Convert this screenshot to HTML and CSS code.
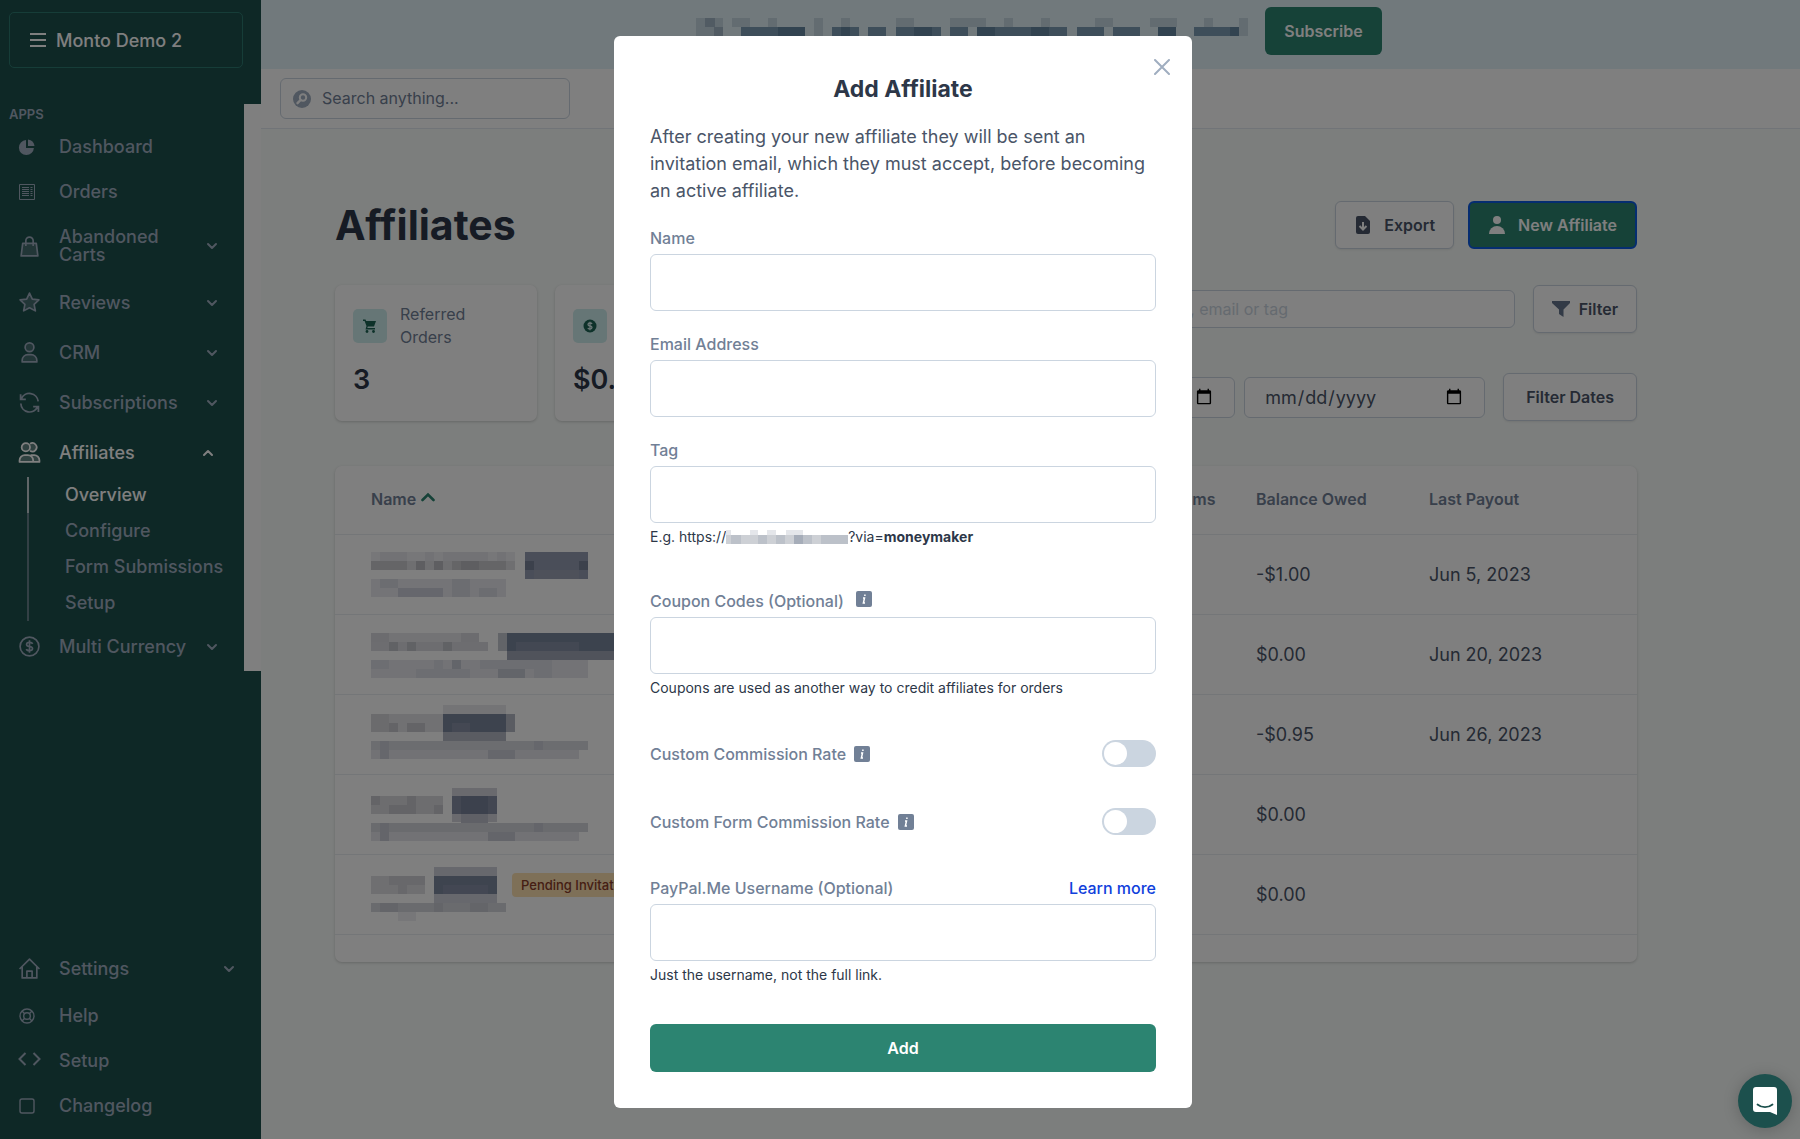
FILE: index.html
```html
<!DOCTYPE html>
<html lang="en">
<head>
  <meta charset="UTF-8">
  <meta name="viewport" content="width=device-width, initial-scale=1.0">
  <title>Affiliates - Monto</title>
  <link rel="stylesheet" href="styles.css">
</head>
<body>
<svg width="0" height="0" class="sprite">
  <symbol id="chevron-down" viewBox="0 0 12 8"><path d="M2 2l4 4 4-4" fill="none" stroke="currentColor" stroke-width="2" stroke-linecap="round" stroke-linejoin="round"/></symbol>
  <symbol id="chevron-up" viewBox="0 0 12 8"><path d="M2 6l4-4 4 4" fill="none" stroke="currentColor" stroke-width="2" stroke-linecap="round" stroke-linejoin="round"/></symbol>
  <symbol id="info" viewBox="0 0 16 16"><rect width="16" height="16" rx="2" fill="#718096"/><path d="M8.900 3.500v1.400M7 7h1.500l-1.100 5h1.600" fill="none" stroke="#fff" stroke-width="1.500"/></symbol>
</svg>

<div class="app">
  <aside class="sidebar">
    <div class="store">
      <button class="store-btn">
        <svg width="16" height="14" viewBox="0 0 16 14"><path d="M0 1h16M0 7h16M0 13h16" stroke="currentColor" stroke-width="2"/></svg>
        Monto Demo 2
      </button>
    </div>

    <div class="nav-scroll">
      <nav class="nav">
        <div class="nav-title">APPS</div>
        <a href="#" class="nav-item">
          <svg class="icon small" viewBox="0 0 18 18" fill="currentColor"><path d="M8 2.100V10h7.900A7.500 7.500 0 1 1 8 2.100z"/><path d="M10 1.500A7.500 7.500 0 0 1 16.500 8H10z"/></svg>
          <span>Dashboard</span>
        </a>
        <a href="#" class="nav-item">
          <svg class="icon small" viewBox="0 0 18 18" fill="none" stroke="currentColor"><path d="M1.500 1.500h15v15h-15z"/><path d="M4 4.500h7M4 6.500h7M4 8.500h7M4 10.500h7M4 12.500h7M12.500 4.500h2M12.500 6.500h2M12.500 8.500h2M12.500 10.500h2M12.500 12.500h2"/></svg>
          <span>Orders</span>
        </a>
        <a href="#" class="nav-item">
          <svg class="icon" viewBox="0 0 22 22" stroke="currentColor" stroke-width="1.600" fill="none" stroke-linejoin="round"><path d="M4.500 8h13L19 20H3z" fill="currentColor" fill-opacity=".3"/><path d="M7.500 10.500V5.500a3.500 3.500 0 0 1 7 0v5"/></svg>
          <span>Abandoned Carts</span>
          <svg class="chev"><use href="#chevron-down"/></svg>
        </a>
        <a href="#" class="nav-item">
          <svg class="icon" viewBox="0 0 22 22" stroke="currentColor" stroke-width="1.600" fill="currentColor" fill-opacity=".3" stroke-linejoin="round"><path d="M11 2l2.700 5.700 6.300.8-4.600 4.300 1.200 6.200L11 16l-5.600 3 1.200-6.200L2 8.500l6.300-.8z"/></svg>
          <span>Reviews</span>
          <svg class="chev"><use href="#chevron-down"/></svg>
        </a>
        <a href="#" class="nav-item">
          <svg class="icon" viewBox="0 0 22 22" stroke="currentColor" stroke-width="1.600" fill="currentColor" fill-opacity=".3" stroke-linejoin="round"><circle cx="11" cy="6" r="4.200"/><path d="M4 20v-1.500a5.500 5.500 0 0 1 5.500-5.500h3a5.500 5.500 0 0 1 5.500 5.500V20z"/></svg>
          <span>CRM</span>
          <svg class="chev"><use href="#chevron-down"/></svg>
        </a>
        <a href="#" class="nav-item">
          <svg class="icon" viewBox="0 0 22 22" stroke="currentColor" stroke-width="1.700" fill="none"><path d="M2.500 3v5h5M3.200 7.500A8.400 8.400 0 0 1 19.300 10M19.500 20v-5h-5M18.800 15A8.400 8.400 0 0 1 2.700 12"/></svg>
          <span>Subscriptions</span>
          <svg class="chev"><use href="#chevron-down"/></svg>
        </a>
        <a href="#" class="nav-item active">
          <svg class="icon" viewBox="0 0 22 22" stroke="currentColor" stroke-width="1.700" fill="currentColor" fill-opacity=".3" stroke-linejoin="round"><circle cx="7.500" cy="6" r="4"/><path d="M11.500 2.700a4 4 0 1 1 0 6.600M1.500 20v-1.500a5 5 0 0 1 5-5h3a5 5 0 0 1 5 5V20zM12 13.500h3.500a5 5 0 0 1 5 5V20h-6"/></svg>
          <span>Affiliates</span>
          <svg class="chev up"><use href="#chevron-up"/></svg>
        </a>
        <div class="subnav">
          <a href="#" class="active">Overview</a>
          <a href="#">Configure</a>
          <a href="#">Form Submissions</a>
          <a href="#">Setup</a>
        </div>
        <a href="#" class="nav-item">
          <svg class="icon" viewBox="0 0 22 22" stroke="currentColor" stroke-width="1.600" fill="none"><circle cx="11" cy="11" r="9"/><path d="M14 8.500c-.4-1.200-1.500-1.500-3-1.500s-2.800.6-2.800 2 1.300 1.800 2.800 2 2.900.6 2.900 2-1.400 2-2.900 2-2.700-.4-3-1.600M11 5v12"/></svg>
          <span>Multi Currency</span>
          <svg class="chev"><use href="#chevron-down"/></svg>
        </a>
      </nav>
    </div>

    <nav class="nav-bottom">
      <a href="#" class="nav-item">
        <svg class="icon" viewBox="0 0 22 22" stroke="currentColor" stroke-width="1.600" fill="none" stroke-linejoin="round"><path d="M1.500 11.500L11 2l9.500 9.500M4 9.500V20h14V9.500"/><path d="M8.500 20v-6.500h5V20"/></svg>
        <span>Settings</span>
        <svg class="chev"><use href="#chevron-down"/></svg>
      </a>
      <a href="#" class="nav-item">
        <svg class="icon small" viewBox="0 0 18 18" stroke="currentColor" stroke-width="1.400" fill="none"><circle cx="9" cy="9" r="7"/><circle cx="9" cy="9" r="3.300"/><path d="M4 4l2.700 2.700M14 4l-2.700 2.700M4 14l2.700-2.700M14 14l-2.700-2.700"/></svg>
        <span>Help</span>
      </a>
      <a href="#" class="nav-item">
        <svg class="icon wide" viewBox="0 0 23 18" stroke="currentColor" stroke-width="2" fill="none"><path d="M7.500 1L1.500 7l6 6M15.500 1l6 6-6 6"/></svg>
        <span>Setup</span>
      </a>
      <a href="#" class="nav-item">
        <svg class="icon small" viewBox="0 0 18 18" stroke="currentColor" stroke-width="1.400" fill="none"><rect x="2" y="2" width="14" height="14" rx="2"/></svg>
        <span>Changelog</span>
      </a>
    </nav>
  </aside>

  <div class="main">
    <div class="banner">
      <svg width="552" height="36" viewBox="0 0 552 36" shape-rendering="crispEdges">
        <g fill="#c6d8e2">
          <path d="M0 0h27v18H0zM36 0h18v9H36zM72 0h9v9h-9zM118 0h9v18h-9zM145 0h9v9h-9zM200 0h18v9h-18zM254 0h36v9h-36zM308 0h9v9h-9zM345 0h9v9h-9zM399 0h18v9h-18zM454 0h27v9h-27zM508 0h9v9h-9zM543 0h9v18h-9z"/>
        </g>
        <path d="M9 0h10v9H9zM18 9h9v9h-9z" fill="#a2b6c6"/>
        <path d="M45 9h64v9H45zM136 9h27v9h-27zM172 9h18v9h-18zM200 9h45v9h-45zM254 9h18v9h-18zM281 9h90v9h-90zM381 9h27v9h-27zM417 9h27v9h-27zM462 9h18v9h-18zM498 9h45v9h-45z" fill="#7c9cb4"/>
        <path d="M82 9h27v9H82zM145 9h9v9h-9zM218 9h18v9h-18zM281 9h18v9h-18zM335 9h18v9h-18zM462 9h18v9h-18zM534 9h9v9h-9z" fill="#6486a0"/>
      </svg>
      <button class="btn btn-green">Subscribe</button>
    </div>

    <header class="topbar">
      <label class="search">
        <svg width="20" height="20" viewBox="0 0 20 20"><circle cx="10" cy="10" r="9" fill="#a0aec0"/><circle cx="11" cy="8.500" r="3.200" fill="none" stroke="#fff" stroke-width="2"/><path d="M8.600 11L5.500 14.200" stroke="#fff" stroke-width="2.400" stroke-linecap="round"/></svg>
        <input type="text" placeholder="Search anything..." aria-label="Search anything">
      </label>
    </header>

    <main class="page">
      <div class="page-head">
        <h1>Affiliates</h1>
        <div class="actions">
          <button class="btn btn-white">
            <svg width="18" height="20" viewBox="0 0 18 20"><path d="M4 1h7l5 5v11a2 2 0 0 1-2 2H4a2 2 0 0 1-2-2V3a2 2 0 0 1 2-2z" fill="#4a5568"/><path d="M9 7v7M5.500 11L9 14.500l3.500-3.500" fill="none" stroke="#fff" stroke-width="2"/></svg>
            Export
          </button>
          <button class="btn btn-green focused">
            <svg width="18" height="20" viewBox="0 0 18 20" fill="#fff"><circle cx="9" cy="5" r="4"/><path d="M1 19a8 8 0 0 1 16 0z"/></svg>
            New Affiliate
          </button>
        </div>
      </div>

      <div class="overview">
        <div class="stats">
          <div class="card stat">
            <div class="stat-top">
              <span class="stat-icon"><svg width="14" height="14" viewBox="0 0 14 14" fill="#1c6454"><path d="M0 .5h2.500L3.200 2H13l-2 5.500H4.800L4.300 9H12v1.500H2.500L3.500 7 1.600 2H0z"/><circle cx="4" cy="12.500" r="1.400"/><circle cx="10.500" cy="12.500" r="1.400"/></svg></span>
              <span class="stat-label">Referred Orders</span>
            </div>
            <div class="stat-value">3</div>
          </div>
          <div class="card stat">
            <div class="stat-top">
              <span class="stat-icon"><svg width="14" height="14" viewBox="0 0 14 14"><circle cx="7" cy="7" r="6.500" fill="#1c6454"/><path d="M9 5c-.3-.8-1-1-2-1s-2 .4-2 1.400S6 6.800 7 7s2 .5 2 1.500-1 1.500-2 1.500-1.900-.3-2.100-1.200M7 2.700v8.600" fill="none" stroke="#d8efef" stroke-width="1.300"/></svg></span>
            </div>
            <div class="stat-value">$0.95</div>
          </div>
          <div class="card stat"></div>
        </div>
        <div class="filters">
          <div class="filter-row">
            <input class="field-search" type="text" placeholder="Search by name, email or tag" aria-label="Search affiliates">
            <button class="btn btn-white filter-btn">
              <svg width="18" height="16" viewBox="0 0 18 16"><path d="M0 0h18v2l-6.500 6.500V16L7 13V8.500L0 2z" fill="#64748c"/></svg>
              Filter
            </button>
          </div>
          <div class="filter-row">
            <div class="dates">
              <input type="date" aria-label="From date">
              <input type="date" aria-label="To date">
            </div>
            <button class="btn btn-white dates-btn">Filter Dates</button>
          </div>
        </div>
      </div>

      <div class="card table-card">
        <table>
          <thead>
            <tr>
              <th>Name <svg class="sort" width="14" height="10" viewBox="0 0 14 10"><path d="M1.500 8L7 2.500 12.500 8" fill="none" stroke="#2c8471" stroke-width="2.600" stroke-linecap="round"/></svg></th>
              <th class="col-terms">Terms</th>
              <th class="col-owed">Balance Owed</th>
              <th class="col-payout">Last Payout</th>
            </tr>
          </thead>
          <tbody>
            <tr>
              <td>
                <svg width="220" height="60" shape-rendering="crispEdges">
                  <path d="M0 8h144v9H0z" fill="#eeeef2"/><path d="M9 8h27v9H9zM54 8h9v9h-9zM72 8h45v9H72zM126 8h9v9h-9z" fill="#e4e4ea"/>
                  <path d="M0 17h144v9H0z" fill="#dedee2"/><path d="M0 17h36v9H0zM45 17h9v9h-9zM63 17h9v9h-9zM81 17h54v9H81z" fill="#cacace"/><path d="M45 17h9v9h-9zM63 17h9v9h-9zM90 17h18v9H90z" fill="#bcbcc2"/>
                  <path d="M0 35h135v18H0z" fill="#e8e8ee"/><path d="M9 35h18v9H9zM81 35h18v18H81zM27 44h45v9H27zM108 44h18v9h-18z" fill="#d8dae2"/><path d="M27 44h45v9H27z" fill="#cccfda"/>
                  <path d="M154 8h63v27h-63z" fill="#949cb2"/><path d="M154 17h9v9h-9zM208 17h9v9h-9z" fill="#788298"/><path d="M163 26h45v9h-45z" fill="#9ca2b4"/>
                </svg>
              </td>
              <td></td>
              <td>-$1.00</td>
              <td>Jun 5, 2023</td>
            </tr>
            <tr>
              <td>
                <svg width="260" height="60" shape-rendering="crispEdges">
                  <path d="M0 9h108v9H0z" fill="#e6e6ea"/><path d="M0 9h18v9H0zM90 9h18v9H90z" fill="#d8d8de"/><path d="M0 18h117v9H0z" fill="#dadae0"/><path d="M18 18h9v9h-9zM36 18h9v9h-9zM72 18h9v9h-9z" fill="#c2c4ca"/>
                  <path d="M0 36h217v18H0z" fill="#e6e7ec"/><path d="M0 36h18v9H0zM63 36h9v9h-9zM109 36h72v9h-72zM45 45h54v9H45zM163 45h18v9h-18z" fill="#dadce4"/><path d="M81 36h9v9h-9zM127 45h27v9h-27z" fill="#c6cad4"/>
                  <path d="M127 9h9v18h-9z" fill="#c4c8d0"/><path d="M136 9h124v18H136z" fill="#78869c"/><path d="M136 27h124v9H136z" fill="#a0a6b6"/><path d="M145 18h63v9h-63z" fill="#8690a6"/>
                </svg>
              </td>
              <td></td>
              <td>$0.00</td>
              <td>Jun 20, 2023</td>
            </tr>
            <tr>
              <td>
                <svg width="220" height="60" shape-rendering="crispEdges">
                  <path d="M0 10h72v18H0z" fill="#e2e2e6"/><path d="M0 10h18v18H0z" fill="#d6d6da"/><path d="M18 19h9v9h-9zM36 19h18v9H36z" fill="#c8c8ce"/>
                  <path d="M0 37h217v9H0z" fill="#d8dae0"/><path d="M0 46h208v9H0z" fill="#e4e5ea"/><path d="M9 37h9v18H9zM163 37h9v9h-9zM117 46h27v9h-27z" fill="#ccced8"/>
                  <path d="M72 1h63v9H72z" fill="#e8e8ec"/><path d="M72 10h63v18H72z" fill="#7a879c"/><path d="M81 19h18v9H81z" fill="#8890a6"/><path d="M72 28h63v9H72zM135 10h9v18h-9z" fill="#b4b8c4"/>
                </svg>
              </td>
              <td></td>
              <td>-$0.95</td>
              <td>Jun 26, 2023</td>
            </tr>
            <tr>
              <td>
                <svg width="220" height="60" shape-rendering="crispEdges">
                  <path d="M0 12h72v18H0z" fill="#dadade"/><path d="M0 12h9v9H0zM18 21h18v9H18zM63 21h9v9h-9zM36 12h9v18h-9z" fill="#c8c8ce"/>
                  <path d="M0 39h217v9H0z" fill="#d4d6dc"/><path d="M0 48h208v9H0z" fill="#e4e5ea"/><path d="M9 39h9v18H9zM163 39h9v9h-9zM117 48h27v9h-27z" fill="#c8cad4"/>
                  <path d="M81 4h45v34H81z" fill="#d4d5dc"/><path d="M81 12h45v18H81z" fill="#868ea4"/><path d="M90 12h27v18H90z" fill="#78829a"/><path d="M90 30h27v9H90z" fill="#bec1cc"/>
                </svg>
              </td>
              <td></td>
              <td>$0.00</td>
              <td></td>
            </tr>
            <tr>
              <td>
                <div class="invited">
                  <svg width="135" height="60" shape-rendering="crispEdges">
                    <path d="M0 12h54v18H0z" fill="#dedee2"/><path d="M18 12h36v9H18zM27 21h9v9h-9z" fill="#d0d1d6"/>
                    <path d="M0 39h135v9H0z" fill="#d4d6dc"/><path d="M9 39h18v9H9zM63 39h9v9h-9zM99 39h18v9H99z" fill="#c8cad2"/><path d="M27 48h18v9H27z" fill="#eeeef2"/>
                    <path d="M63 3h63v36H63z" fill="#ced1da"/><path d="M63 12h63v18H63z" fill="#7c889e"/><path d="M72 21h45v9H72z" fill="#868fa6"/>
                  </svg>
                  <span class="tag">Pending Invitation</span>
                </div>
              </td>
              <td></td>
              <td>$0.00</td>
              <td></td>
            </tr>
          </tbody>
        </table>
      </div>
    </main>
  </div>
</div>

<div class="overlay">
  <form class="modal" role="dialog" aria-labelledby="modal-title">
    <button type="button" class="close" aria-label="Close">
      <svg width="16" height="16" viewBox="0 0 16 16"><path d="M1 1l14 14M15 1L1 15" stroke="#a0aec0" stroke-width="2" stroke-linecap="round"/></svg>
    </button>
    <h2 id="modal-title">Add Affiliate</h2>
    <p class="intro">After creating your new affiliate they will be sent an invitation email, which they must accept, before becoming an active affiliate.</p>

    <div class="field">
      <label for="name">Name</label>
      <input type="text" id="name">
    </div>
    <div class="field">
      <label for="email">Email Address</label>
      <input type="email" id="email">
    </div>
    <div class="field with-help">
      <label for="tag">Tag</label>
      <input type="text" id="tag">
      <p class="help">E.g. https://<svg width="122" height="18" viewBox="0 0 122 18" shape-rendering="crispEdges"><path d="M0 2h5v5H0zM24 2h8v5h-8zM41 2h9v5h-9zM60 2h17v5H60z" fill="#e4e6ea"/><path d="M0 7h122v9H0z" fill="#cdd0d5"/><path d="M5 7h10v9H5zM32 7h9v9h-9zM50 7h9v9h-9zM77 7h9v9h-9zM95 7h27v9H95z" fill="#bcc1c9"/><path d="M68 7h9v9h-9z" fill="#a6adb9"/></svg>?via=<b>moneymaker</b></p>
    </div>
    <div class="field with-help">
      <label for="coupons">Coupon Codes (Optional) <svg class="info far"><use href="#info"/></svg></label>
      <input type="text" id="coupons">
      <p class="help">Coupons are used as another way to credit affiliates for orders</p>
    </div>
    <div class="switch-row">
      <label for="rate">Custom Commission Rate <svg class="info"><use href="#info"/></svg></label>
      <input type="checkbox" class="switch" id="rate">
    </div>
    <div class="switch-row">
      <label for="form-rate">Custom Form Commission Rate <svg class="info"><use href="#info"/></svg></label>
      <input type="checkbox" class="switch" id="form-rate">
    </div>
    <div class="field last">
      <div class="label-row">
        <label for="paypal">PayPal.Me Username (Optional)</label>
        <a href="#">Learn more</a>
      </div>
      <input type="text" id="paypal">
      <p class="help">Just the username, not the full link.</p>
    </div>
    <button type="submit" class="btn btn-green add">Add</button>
  </form>
</div>

<button class="chat" aria-label="Open chat">
  <svg width="26" height="28" viewBox="0 0 26 28"><path d="M4 0h18a3 3 0 0 1 3 3v25l-7-3H4a3 3 0 0 1-3-3V3a3 3 0 0 1 3-3z" fill="#fff"/><path d="M5.500 17.500c4.500 3.600 10.500 3.600 15 0" fill="none" stroke="#1c504d" stroke-width="1.800" stroke-linecap="round"/></svg>
</button>
</body>
</html>
```
FILE: styles.css
```css
* { margin: 0; padding: 0; box-sizing: border-box; }
body {
  font-family: Inter, "Liberation Sans", sans-serif;
  font-size: 18px;
  line-height: 27px;
  color: #4a5568;
  background: #f8fcfa;
}
button, input { font: inherit; color: inherit; }
button { cursor: pointer; }
a { color: inherit; text-decoration: none; }
.sprite { position: absolute; }

.app {
  display: flex;
  height: 100vh;
  overflow: hidden;
}

/* Sidebar */
.sidebar {
  width: 261px;
  flex-shrink: 0;
  display: flex;
  flex-direction: column;
  background: #1d504d;
  color: #a0aec0;
}
.store { padding: 12px 18px 36px 9px; }
.store-btn {
  width: 100%;
  height: 56px;
  padding: 0 20px;
  display: flex;
  align-items: center;
  gap: 10px;
  background: none;
  border: 1px solid #2c7a70;
  border-radius: 5px;
  color: #fff;
  font-weight: 500;
}
.nav-scroll {
  background: #fff;
  padding-right: 17px;
}
.nav { background: #1d504d; }
.nav-title {
  padding-left: 9px;
  font-size: 13px;
  line-height: 20px;
  font-weight: 600;
}
.nav-item {
  display: flex;
  align-items: center;
  padding: 14px 26px 13px 18px;
  line-height: 18px;
  font-weight: 500;
}
.nav-item span { flex: 1; }
.nav-item.active { color: #fff; }
.icon {
  width: 23px;
  height: 23px;
  margin-right: 18px;
  flex-shrink: 0;
}
.icon.small {
  width: 18px;
  height: 18px;
  margin-right: 23px;
}
.icon.wide { height: 18px; }
.chev { width: 12px; height: 8px; }
.chev.up { margin-right: 4px; }
.subnav {
  margin-left: 27px;
  font-weight: 500;
}
.subnav a {
  display: block;
  padding-left: 36px;
  line-height: 36px;
  border-left: 2px solid #66808a;
}
.subnav a.active {
  color: #fff;
  border-color: #c0ccd0;
}
.nav-bottom {
  margin-top: auto;
  padding-bottom: 11px;
}

/* Main area */
.main { flex: 1; }
.banner {
  height: 69px;
  padding: 7px 0 0 17px;
  display: flex;
  justify-content: center;
  align-items: flex-start;
  gap: 17px;
  background: #e2f2f8;
}
.banner svg { margin-top: 11px; }
.btn {
  height: 48px;
  padding: 0 18px;
  display: inline-flex;
  align-items: center;
  justify-content: center;
  gap: 12px;
  border: 1px solid transparent;
  border-radius: 6px;
  font-size: 16px;
  font-weight: 600;
  white-space: nowrap;
}
.btn-green { background: #2c8471; color: #fff; }
.btn-white {
  background: #fff;
  border-color: #cbd5e0;
  box-shadow: 0 1px 2px rgba(0, 0, 0, 0.08);
}
.focused { border: 2px solid #0a5ae0; }
.topbar {
  height: 60px;
  padding: 9px 19px;
  background: #fff;
  border-bottom: 1px solid #e2e8f0;
}
.search {
  width: 290px;
  height: 41px;
  padding: 0 11px;
  display: flex;
  align-items: center;
  gap: 10px;
  border: 1px solid #cbd5e0;
  border-radius: 6px;
}
.search input {
  flex: 1;
  min-width: 0;
  border: 0;
  outline: 0;
  font-size: 16px;
}
.search input::placeholder { color: #718096; }

.page { padding: 72px 163px 0 74px; }
.page-head {
  display: flex;
  align-items: center;
  justify-content: space-between;
  margin-bottom: 36px;
}
h1 {
  font-size: 41px;
  line-height: 48px;
  color: #2d3748;
}
.actions { display: flex; gap: 14px; }

.card {
  background: #fff;
  border-radius: 7px;
  box-shadow: 0 1px 3px rgba(0, 0, 0, 0.18);
}
.overview {
  display: flex;
  justify-content: space-between;
  margin-bottom: 45px;
}
.stats {
  display: grid;
  grid-template-columns: repeat(3, 202px);
  gap: 18px;
}
.stat { height: 136px; padding: 18px; }
.stat-top {
  display: flex;
  align-items: center;
  gap: 13px;
  min-height: 46px;
}
.stat-icon {
  width: 34px;
  height: 34px;
  display: flex;
  align-items: center;
  justify-content: center;
  border-radius: 5px;
  background: #ccecec;
}
.stat-label {
  width: 100px;
  font-size: 16px;
  line-height: 23px;
  color: #718096;
}
.stat-value {
  margin-top: 11px;
  font-size: 27px;
  line-height: 40px;
  font-weight: 600;
  color: #2d3748;
}
.filters {
  display: flex;
  flex-direction: column;
  gap: 40px;
}
.filter-row {
  display: flex;
  align-items: center;
  justify-content: flex-end;
  gap: 18px;
}
.filters input {
  background: #fff;
  border: 1px solid #cbd5e0;
  border-radius: 6px;
}
.filters .field-search {
  width: 460px;
  height: 38px;
  padding: 0 12px;
  font-size: 16px;
}
.field-search::placeholder { color: #cbd5e0; }
.filter-btn { gap: 9px; }
.dates-btn { padding: 0 22px; }
.dates { display: flex; gap: 9px; }
.dates input {
  width: 241px;
  height: 41px;
  padding: 0 19px;
}

/* Affiliates table */
.table-card { padding-bottom: 27px; }
table {
  width: 100%;
  table-layout: fixed;
  border-collapse: collapse;
  text-align: left;
}
th, td {
  padding: 0 0 0 36px;
  border-bottom: 1px solid #e8ecf0;
}
th {
  height: 68px;
  font-size: 16px;
  font-weight: 600;
  color: #718096;
}
td { height: 80px; }
td svg { display: block; }
.sort { margin-left: 1px; vertical-align: 3px; }
.col-terms { width: 89px; }
.col-owed { width: 173px; }
.col-payout { width: 244px; }
.invited {
  display: flex;
  align-items: flex-start;
  gap: 6px;
}
.tag {
  margin-top: 9px;
  padding: 0 9px;
  border-radius: 4px;
  background: #fde0b0;
  color: #8a3c28;
  font-size: 13px;
  line-height: 24px;
  font-weight: 500;
}

/* Add affiliate modal */
.overlay {
  position: fixed;
  inset: 0;
  padding: 36px 0 0 6px;
  background: rgba(0, 0, 0, 0.5);
}
.modal {
  position: relative;
  width: 578px;
  margin: 0 auto;
  padding: 40px 36px 36px;
  background: #fff;
  border-radius: 6px;
}
.close {
  position: absolute;
  top: 23px;
  right: 22px;
  width: 16px;
  height: 16px;
  border: 0;
  background: none;
}
.close svg { display: block; }
h2 {
  margin-bottom: 20px;
  font-size: 23px;
  line-height: 27px;
  text-align: center;
  color: #2d3748;
}
.intro { margin-bottom: 22px; }
.field { margin-bottom: 21px; }
.field.with-help { margin-bottom: 42px; }
.field.last { margin-bottom: 39px; }
.modal label {
  display: block;
  font-size: 16px;
  line-height: 24px;
  font-weight: 500;
  color: #718096;
}
.field input {
  display: block;
  width: 100%;
  height: 57px;
  margin-top: 4px;
  padding: 0 14px;
  border: 1px solid #cbd5e0;
  border-radius: 6px;
  background: #fff;
}
.help {
  margin-top: 4px;
  font-size: 14px;
  line-height: 20px;
  color: #2d3748;
}
.help svg { vertical-align: -4px; }
.info {
  width: 16px;
  height: 16px;
  margin-left: 4px;
  vertical-align: -2px;
}
.info.far { margin-left: 8px; vertical-align: 0; }
.label-row {
  display: flex;
  justify-content: space-between;
}
.label-row a {
  font-size: 16px;
  line-height: 24px;
  font-weight: 500;
  color: #1040dc;
}
.switch-row {
  display: flex;
  align-items: center;
  justify-content: space-between;
  margin-bottom: 41px;
}
.switch {
  appearance: none;
  width: 54px;
  height: 27px;
  padding: 2px;
  border-radius: 14px;
  background: #cbd5e0;
}
.switch::before {
  content: '';
  display: block;
  width: 23px;
  height: 23px;
  border-radius: 50%;
  background: #fff;
}
.switch:checked { background: #2c8471; }
.switch:checked::before { margin-left: auto; }
.add { width: 100%; }

.chat {
  position: fixed;
  right: 8px;
  bottom: 11px;
  width: 54px;
  height: 54px;
  display: flex;
  align-items: center;
  justify-content: center;
  border: 0;
  border-radius: 50%;
  background: #1c504d;
  box-shadow: 0 2px 16px rgba(0, 0, 0, 0.2);
}
```
